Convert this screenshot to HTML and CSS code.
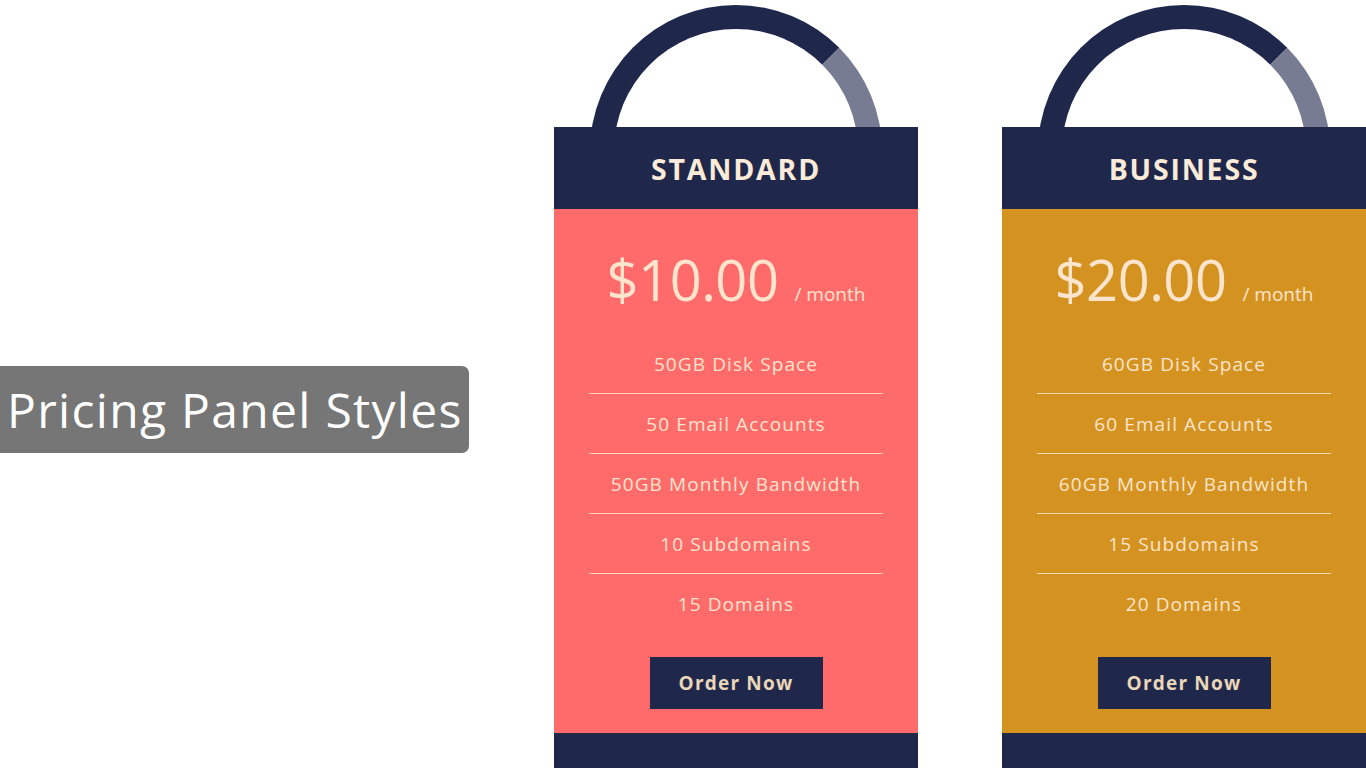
FILE: index.html
```html
<!DOCTYPE html>
<html lang="en">
<head>
<meta charset="utf-8">
<title>Pricing Panel Styles</title>
<link rel="stylesheet" href="styles.css">
</head>
<body>
<div class="page">
  <div class="label-col">
    <div class="label">Pricing Panel Styles</div>
  </div>

  <div class="card card-standard">
    <div class="handle"><div class="ring"></div></div>
    <div class="card-head">STANDARD</div>
    <div class="card-body">
      <div class="price"><span class="amount">$10.00</span><span class="per">/ month</span></div>
      <ul class="features">
        <li>50GB Disk Space</li>
        <li>50 Email Accounts</li>
        <li>50GB Monthly Bandwidth</li>
        <li>10 Subdomains</li>
        <li>15 Domains</li>
      </ul>
      <div class="action"><a class="btn" href="#">Order Now</a></div>
    </div>
    <div class="card-foot"></div>
  </div>

  <div class="card card-business">
    <div class="handle"><div class="ring"></div></div>
    <div class="card-head">BUSINESS</div>
    <div class="card-body">
      <div class="price"><span class="amount">$20.00</span><span class="per">/ month</span></div>
      <ul class="features">
        <li>60GB Disk Space</li>
        <li>60 Email Accounts</li>
        <li>60GB Monthly Bandwidth</li>
        <li>15 Subdomains</li>
        <li>20 Domains</li>
      </ul>
      <div class="action"><a class="btn" href="#">Order Now</a></div>
    </div>
    <div class="card-foot"></div>
  </div>
</div>
</body>
</html>
```

FILE: styles.css
```css
* { box-sizing: border-box; }

html, body {
  margin: 0;
  padding: 0;
  height: 768px;
  overflow: hidden;
  background: #ffffff;
  font-family: "Open Sans", "Noto Sans", sans-serif;
}

.page {
  display: flex;
  align-items: flex-start;
  padding-top: 5px;
  width: 1366px;
}

.label-col {
  width: 469px;
  padding-top: 361px;
  margin-right: 85px;
  flex: none;
}

.label {
  background: #767676;
  color: #ffffff;
  height: 87px;
  border-radius: 0 7px 7px 0;
  font-size: 48px;
  line-height: 87px;
  padding-left: 7px;
  white-space: nowrap;
  letter-spacing: 1.3px;
}

.card {
  width: 364px;
  flex: none;
  display: flex;
  flex-direction: column;
}

.card + .card { margin-left: 84px; }

.handle {
  height: 122px;
  overflow: hidden;
  display: flex;
  justify-content: center;
}

.ring {
  width: 292px;
  height: 292px;
  flex: none;
  border-radius: 50%;
  border: 24px solid #1f284b;
  border-right-color: #777c92;
}

.card-head {
  background: #1f284b;
  height: 82px;
  line-height: 84px;
  text-align: center;
  color: #fdebd9;
  font-weight: 700;
  font-size: 28.5px;
  letter-spacing: 1.8px;
}

.card-body {
  height: 524px;
  display: flex;
  flex-direction: column;
  color: #fde5cd;
}

.card-standard .card-body { background: #ff6b6b; }
.card-business .card-body { background: #d49220; }

.price {
  padding: 40px 0 25px;
  line-height: 60px;
  height: 125px;
  text-align: center;
  white-space: nowrap;
}

.amount {
  font-size: 56px;
  letter-spacing: -0.5px;
}

.per {
  font-size: 19px;
  margin-left: 16px;
}

.features {
  list-style: none;
  margin: 0 35px;
  padding: 0;
}

.features li {
  height: 60px;
  line-height: 60px;
  text-align: center;
  font-size: 19px;
  letter-spacing: 1.1px;
  border-bottom: 1px solid rgba(253, 229, 205, 0.85);
}

.features li:last-child { border-bottom: none; }

.action {
  display: flex;
  justify-content: center;
  padding-top: 23px;
}

.btn {
  display: block;
  width: 173px;
  height: 52px;
  line-height: 52px;
  text-align: center;
  background: #1f284b;
  color: #ead7b9;
  font-weight: 700;
  font-size: 19px;
  letter-spacing: 1.2px;
  text-decoration: none;
}

.card-foot {
  background: #1f284b;
  height: 40px;
}
```
